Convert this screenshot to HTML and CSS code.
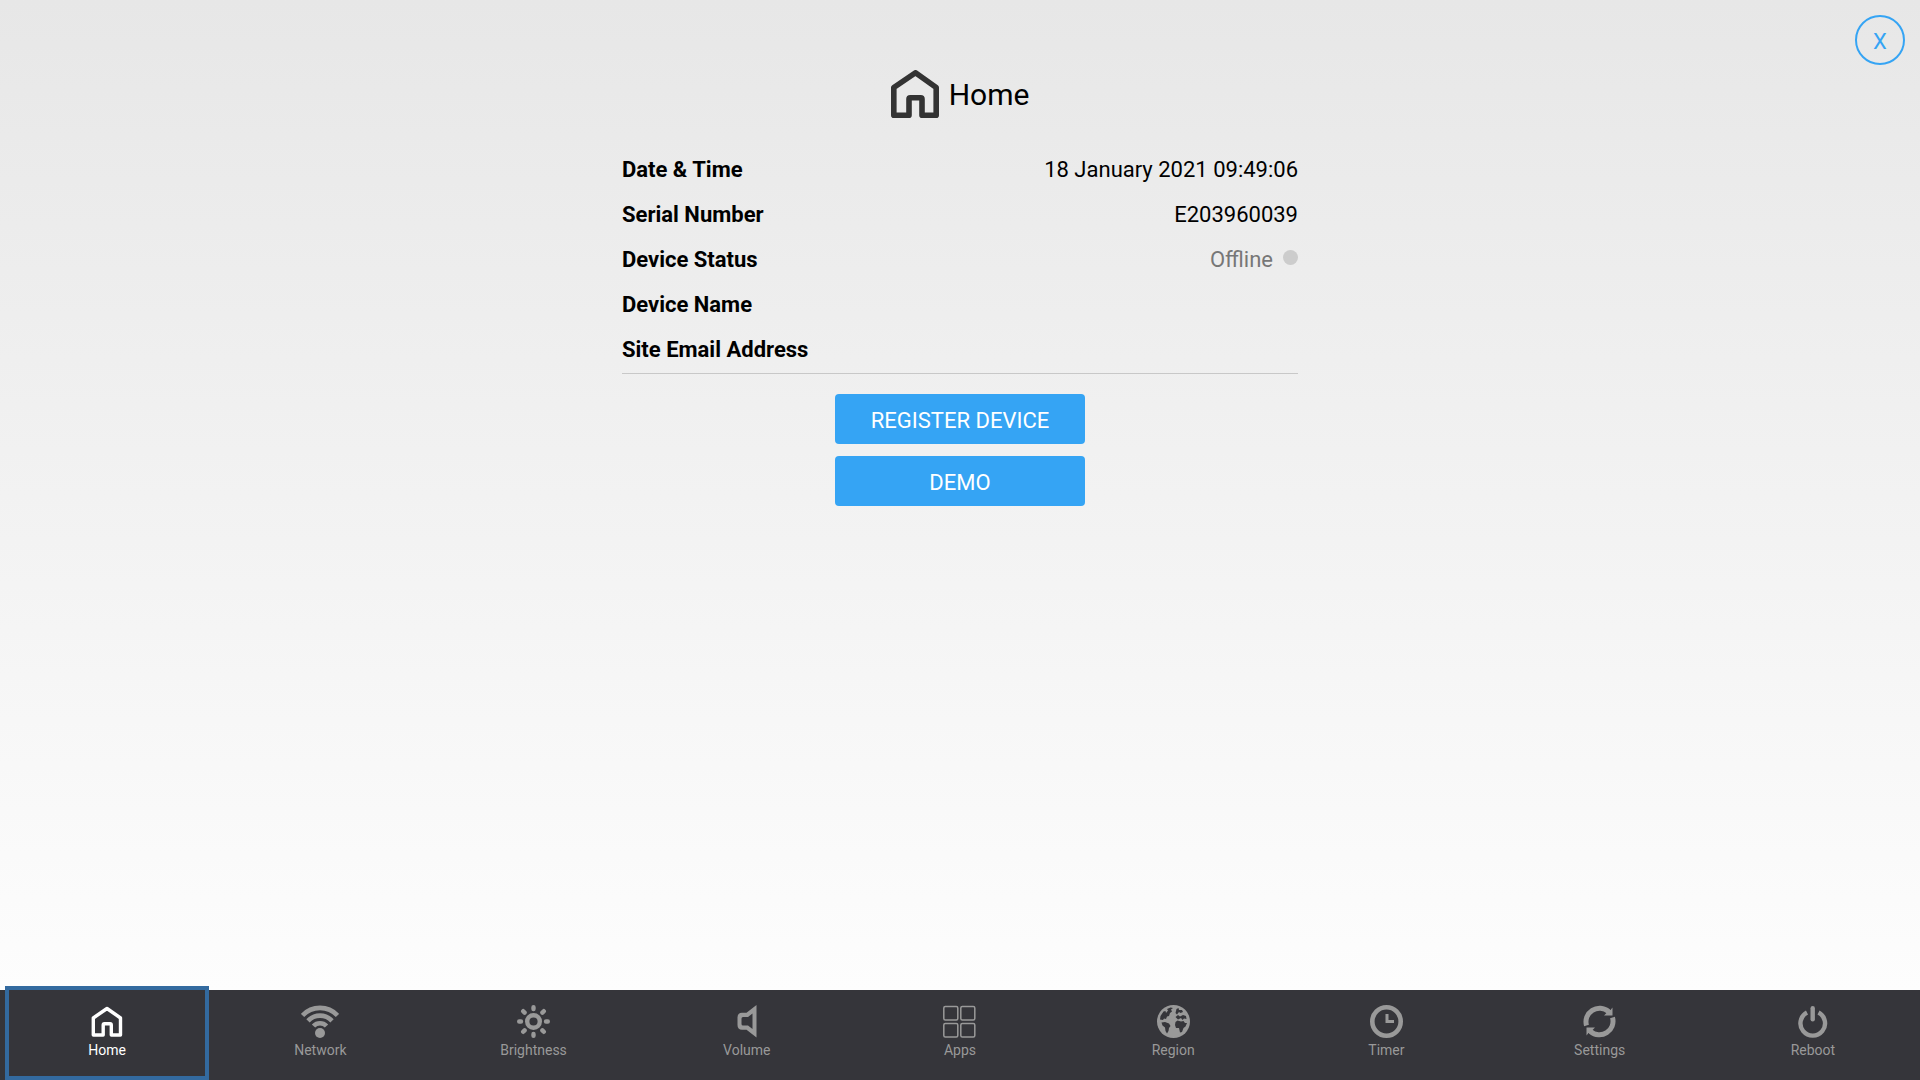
FILE: index.html
```
<!DOCTYPE html>
<html lang="en">
<head>
<meta charset="utf-8">
<title>Home</title>
<link rel="stylesheet" href="styles.css">
</head>
<body>
<button type="button" class="close">X</button>

<main>
	<h1>
		<svg class="title-icon" viewBox="0 0 48 48"><path d="M24.500 2.800L45.200 17.500V45.200H31V29Q31 27.700 29.700 27.700H19.300Q18 27.700 18 29V45.200H2.800V17.500Z"/></svg>
		Home
	</h1>

	<dl class="info">
		<div class="row"><dt>Date &amp; Time</dt><dd>18 January 2021 09:49:06</dd></div>
		<div class="row"><dt>Serial Number</dt><dd>E203960039</dd></div>
		<div class="row"><dt>Device Status</dt><dd class="offline">Offline<span class="dot"></span></dd></div>
		<div class="row"><dt>Device Name</dt><dd></dd></div>
		<div class="row"><dt>Site Email Address</dt><dd></dd></div>
	</dl>

	<div class="actions">
		<button type="button" class="btn">REGISTER DEVICE</button>
		<button type="button" class="btn">DEMO</button>
	</div>
</main>

<nav class="tabs">
	<a href="#home" class="tab active">
		<svg viewBox="0 0 33 33"><path class="line" stroke-width="3.400" stroke-linejoin="round" d="M16 3.500L29.500 13V30H20.300V20Q20.300 18.800 19.100 18.800H13.400Q12.200 18.800 12.200 20V30H2.300V13Z"/></svg>
		<span>Home</span>
	</a>
	<a href="#network" class="tab">
		<svg viewBox="0 0 38 33">
			<path class="line" stroke-width="4.600" d="M1.500 10.500A24 24 0 0 1 36.500 10.500M7 15.800A16.500 16.500 0 0 1 31 15.800M12.500 21A9 9 0 0 1 25.500 21"/>
			<circle class="fill" cx="19" cy="28" r="5"/>
		</svg>
		<span>Network</span>
	</a>
	<a href="#brightness" class="tab">
		<svg viewBox="0 0 33 33">
			<circle class="line" stroke-width="4.400" cx="16.500" cy="16.500" r="6.300"/>
			<path class="line" stroke-width="4.400" stroke-linecap="round" d="M16.500 2.200V4M16.500 29V30.800M2.200 16.500H4M29 16.500H30.800M6.200 6.200L7.600 7.600M25.400 25.400L26.800 26.800M26.800 6.200L25.400 7.600M7.600 25.400L6.200 26.800"/>
		</svg>
		<span>Brightness</span>
	</a>
	<a href="#volume" class="tab">
		<svg viewBox="0 0 33 33"><path class="fill" fill-rule="evenodd" d="M26.500 0V32.500L16.500 24.800H12Q7.500 24.800 7.500 20V12.500Q7.500 7.700 12 7.700H16.500ZM22.500 8.500L18 12H13Q11.500 12 11.500 13.500V19Q11.500 20.500 13 20.500H18L22.500 24Z"/></svg>
		<span>Volume</span>
	</a>
	<a href="#apps" class="tab">
		<svg viewBox="0 0 33 33"><g class="line" stroke-width="1.500">
			<rect x="0.800" y="1.500" width="14" height="13.500" rx="1.500"/>
			<rect x="17.800" y="1.500" width="14" height="13.500" rx="1.500"/>
			<rect x="0.800" y="18.500" width="14" height="13.500" rx="1.500"/>
			<rect x="17.800" y="18.500" width="14" height="13.500" rx="1.500"/>
		</g></svg>
		<span>Apps</span>
	</a>
	<a href="#region" class="tab">
		<svg viewBox="0 0 33 33">
			<circle class="fill" cx="16.500" cy="16.500" r="16.500"/>
			<path class="hole" d="M3.500 11L6.500 6.500L8.500 6L9 8L11 5.500L10 4L13.500 2.500L16 3L14 4.500L15 6.500L13 8L12 11L10 11.500L9 14L7 13.500L6 15L3 14.500Z"/>
			<path class="hole" d="M4.500 17.500L8 17L12 18.500L13.500 21L12 23L11.500 26L10 28.500L8.500 26L8 22.500L5.500 20.500Z"/>
			<path class="hole" d="M18.500 17L20.500 15.500L24 16.500L26.500 16L28 18H30L28.500 21.500L26.500 23L25 27L23 27.500L22 23H19L18 20Z"/>
			<path class="hole" d="M19.500 4L21.500 3L22 5L25 5L26 7L23.500 8L22 7L20 9.500L18.500 8Z"/>
			<path class="hole" d="M18.500 12L21 10L23 11.500L26 10L29 11L29.500 14L27 13.500L25.500 15L24 13L21 14.500Z"/>
		</svg>
		<span>Region</span>
	</a>
	<a href="#timer" class="tab">
		<svg viewBox="0 0 33 33">
			<circle class="line" stroke-width="4.600" cx="16.500" cy="16.500" r="14.200"/>
			<path class="line" stroke-width="3" d="M17 9V16.500H24"/>
		</svg>
		<span>Timer</span>
	</a>
	<a href="#settings" class="tab">
		<svg viewBox="0 0 33 33">
			<path class="line" stroke-width="5" d="M3.500 20.500A13.600 13.600 0 0 1 25.500 6.500M29.500 12.500A13.600 13.600 0 0 1 7.500 26.500"/>
			<path class="fill" d="M29.500 2.500V10.500H21L23.500 8L25 4.500L27.500 5ZM3.500 30.500V22.500H12L9.500 25L8 28.500L5.500 28Z"/>
		</svg>
		<span>Settings</span>
	</a>
	<a href="#reboot" class="tab">
		<svg viewBox="0 0 33 33">
			<path class="line" stroke-width="4.400" d="M11 7.500A12.300 12.300 0 1 0 22.500 7.500"/>
			<path class="line" stroke-width="4.400" stroke-linecap="round" d="M16.700 3.200V14.200"/>
		</svg>
		<span>Reboot</span>
	</a>
</nav>
</body>
</html>
```
FILE: styles.css
```
*{
	box-sizing: border-box;
}
body{
	margin: 0;
	min-height: 100vh;
	display: flex;
	flex-direction: column;
	font-family: Roboto, sans-serif;
	font-size: 22px;
	color: #000;
	background: linear-gradient(#e7e7e7, #fff);
}
button{
	font-family: inherit;
	font-size: 22px;
	cursor: pointer;
}
.close{
	position: absolute;
	top: 15px;
	right: 15px;
	width: 50px;
	height: 50px;
	padding: 2px 0 0;
	border: 2px solid #35a4f4;
	border-radius: 50%;
	background: none;
	color: #35a4f4;
}
main{
	flex: 1;
	width: 100%;
	max-width: 676px;
	margin: 0 auto;
	padding-top: 70px;
}
h1{
	display: flex;
	justify-content: center;
	gap: 10px;
	margin: 0 0 27px;
	font-size: 30px;
	line-height: 50px;
	font-weight: normal;
}
.title-icon{
	width: 48px;
	height: 48px;
	fill: none;
	stroke: #333;
	stroke-width: 5.600;
	stroke-linejoin: round;
}
.info{
	margin: 0;
	padding-bottom: 1px;
	border-bottom: 1px solid #c8c8c8;
}
.row{
	display: flex;
	justify-content: space-between;
	height: 45px;
	line-height: 45px;
}
dt{
	font-weight: bold;
}
dd{
	margin: 0;
}
.offline{
	color: #777;
}
.dot{
	display: inline-block;
	width: 15px;
	height: 15px;
	margin-left: 10px;
	border-radius: 50%;
	background: #ccc;
	vertical-align: 2px;
}
.actions{
	display: flex;
	flex-direction: column;
	align-items: center;
	gap: 12px;
	padding: 20px 0;
}
.btn{
	width: 250px;
	height: 50px;
	padding: 2px 0 0;
	border: 0;
	border-radius: 4px;
	color: #fff;
	background: #35a4f4;
}
.tabs{
	display: grid;
	grid-template-columns: repeat(9, 1fr);
	gap: 17px;
	padding: 0 9px 4px;
	background: #35353a;
}
.tab{
	display: flex;
	flex-direction: column;
	align-items: center;
	height: 86px;
	padding-top: 15px;
	font-size: 14px;
	line-height: 24px;
	color: #999;
	text-decoration: none;
}
.tab svg{
	height: 33px;
}
.active{
	color: #fff;
	outline: 4px solid #336a9f;
}
.line{
	fill: none;
	stroke: currentColor;
}
.fill{
	fill: currentColor;
}
.hole{
	fill: #35353a;
}
```
